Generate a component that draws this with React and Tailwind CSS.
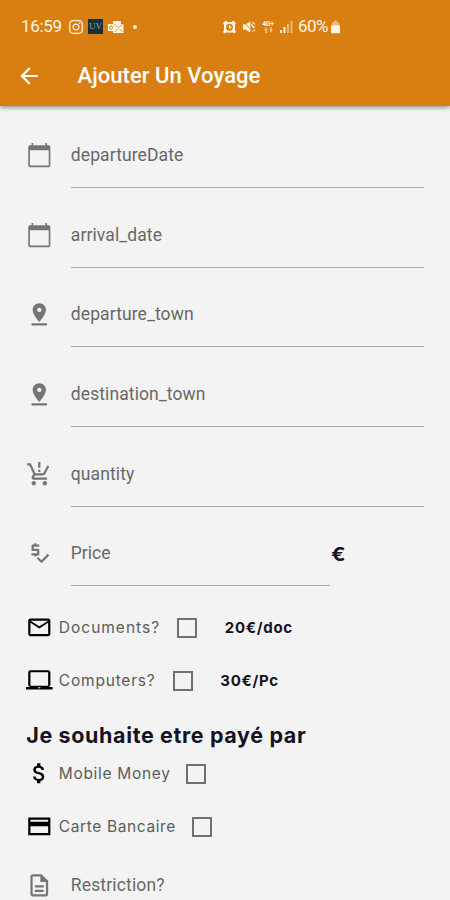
import {
  MdArrowBack, MdPinDrop, MdProductionQuantityLimits, MdPriceCheck,
  MdMailOutline, MdAttachMoney, MdOutlineDescription,
} from "react-icons/md";
import { FaInstagram } from "react-icons/fa";

const ICON = 26.6;

function CardIcon() {
  return (
    <svg width={ICON} height={ICON} viewBox="0 0 24 24" fill="currentColor">
      <path fillRule="evenodd" d="M2 4h20v16H2zM4 6v2h16V6zM4 12v6h16v-6z" />
    </svg>
  );
}

function CalendarIcon({ size }) {
  return (
    <svg width={size} height={size} viewBox="0 0 24 24" fill="currentColor">
      <path fillRule="evenodd" d="M5 1h1.500v2h11V1H19v2h1.200c1 0 1.800.8 1.800 1.800V21c0 1-.8 1.800-1.800 1.800H3.800C2.800 22.800 2 22 2 21V4.800C2 3.800 2.800 3 3.800 3H5zM3.500 7.500v13.800h17V7.500z" />
    </svg>
  );
}

function LaptopIcon() {
  return (
    <svg width={ICON} height={ICON} viewBox="0 0 24 24" fill="currentColor">
      <path fillRule="evenodd" d="M20 18c1.100 0 2-.9 2-2V5c0-1.100-.9-2-2-2H4c-1.100 0-2 .9-2 2v11c0 1.100.9 2 2 2H0v2.300h24V18zM4 4.700h16V17H4zM11 18.200h2v1h-2z" />
    </svg>
  );
}

function StatusBar() {
  return (
    <div className="flex h-[53px] items-center pl-[21px] text-[#fff3e2]">
      <span className="w-[47px] text-[17px] leading-none tracking-[-0.3px]">16:59</span>
      <FaInstagram size={16} />
      <span className="ml-[4px] flex h-[15px] w-[15px] items-center justify-center bg-[#19303c] font-['Liberation_Serif',serif] text-[9px] leading-none text-[#8fa3ab]">UV</span>
      <svg className="ml-[5px]" width="16" height="14" viewBox="0 0 16 14" fill="currentColor">
        <path d="M5 1h8v3h2.500v9H5v-2H0V4h5z" />
        <circle cx="3" cy="7.500" r="1.500" fill="none" stroke="#d97f12" />
        <path d="M6.500 4.500l4 3 4-3M7 12l2.500-3M14.500 12l-3-3" fill="none" stroke="#d97f12" strokeWidth="0.800" />
      </svg>
      <span className="ml-[9px] h-[4px] w-[4px] rounded-full bg-current" />
      <svg className="ml-[86px]" width="13" height="14" viewBox="0 0 13 14" fill="currentColor">
        <path d="M0 3L3 .5 4.500 2h4L10 .5 13 3l-1 2v5l1 2-1.500 1.500L10 12.500H3L1.500 13.500 0 12l1-2V5z" />
        <circle cx="6.500" cy="7.300" r="3.500" fill="#d97f12" />
        <path d="M6.500 5v2.500h2" fill="none" stroke="currentColor" strokeWidth="1.300" />
      </svg>
      <svg className="ml-[6px]" width="14" height="14" viewBox="0 0 15 14" fill="currentColor">
        <path d="M1 4h3l5-3v12l-5-3H1z" />
        <path d="M11 2l3 2M11 7h3M11 12l3-2M10 4l3 4" fill="none" stroke="currentColor" strokeWidth="1.300" />
        <path d="M1 1l12 12" stroke="#d97f12" strokeWidth="1" />
      </svg>
      <span className="ml-[5px] flex w-[14px] flex-col items-center text-[7px] leading-[6px] font-bold">
        <span className="tracking-[-0.300px]">4G+</span>
        <svg width="9" height="6" viewBox="0 0 9 6" fill="currentColor" opacity="0.5">
          <path d="M0 3l2-3 2 3H3v3H1V3zM5 3h1V0h2v3h1L7 6z" />
        </svg>
      </span>
      <svg className="ml-[5px]" width="13" height="13" viewBox="0 0 13 13" fill="currentColor">
        <path d="M0 10h2v3H0zM3.500 7h2v6h-2z" />
        <path d="M7 4h2v9H7zM10.500 1h2v12h-2z" opacity="0.5" />
      </svg>
      <span className="ml-[5px] text-[17px] leading-none tracking-[-0.600px]">60%</span>
      <svg className="ml-[3px]" width="9" height="14" viewBox="0 0 10 14" fill="currentColor">
        <path d="M3 0h4v2h2v4H1V2h2z" opacity="0.5" />
        <rect x="0" y="5" width="10" height="9" rx="1" />
      </svg>
    </div>
  );
}

function Field({ Icon, label, spacing = "", suffix }) {
  return (
    <div className="flex h-[79.700px] items-start">
      <span className="mt-[2px] w-[44.500px] shrink-0 text-[#757575]"><Icon size={ICON} /></span>
      <div className={`h-[48px] border-b border-[#acacac] ${suffix ? "w-[259px]" : "w-[353px]"}`}>
        <span className={`block pt-[2px] text-[17.500px] leading-[26px] text-[#686868] ${spacing}`}>{label}</span>
      </div>
      {suffix && <span className="mt-[4px] ml-[1px] origin-left scale-x-[1.15] font-['Inter',sans-serif] text-[18.500px] leading-[25px] font-bold text-[#16131f]">{suffix}</span>}
    </div>
  );
}

function Option({ icon, label, width, spacing, price }) {
  return (
    <div className="flex h-[53px] items-center font-['Inter',sans-serif]">
      <span className="w-[32.500px] shrink-0 text-black">{icon}</span>
      <span className={`shrink-0 text-[15.500px] leading-none whitespace-nowrap text-[#5c5c5c] ${width} ${spacing}`}>{label}</span>
      <span className="h-[20px] w-[20px] shrink-0 border-2 border-[#707070]" />
      {price && <span className="ml-[27.500px] text-[15px] leading-none font-bold tracking-[0.700px] text-[#16131f]">{price}</span>}
    </div>
  );
}

export default function App() {
  return (
    <div className="h-[900px] w-[450px] overflow-hidden bg-[#f3f3f3] font-['Roboto',sans-serif]">
      <header className="h-[106px] bg-[#d97f12] shadow-[0_1px_5px_rgba(0,0,0,0.5)]">
        <StatusBar />
        <div className="flex h-[46px] items-center pl-[16px] text-white">
          <MdArrowBack size={26} />
          <h1 className="ml-[35.500px] text-[22px] leading-none font-medium tracking-[0.050px]">Ajouter Un Voyage</h1>
        </div>
      </header>
      <main className="pt-[34px] pl-[26.300px]">
        <Field Icon={CalendarIcon} label="departureDate" spacing="tracking-[0.100px]" />
        <Field Icon={CalendarIcon} label="arrival_date" spacing="tracking-[0.100px]" />
        <Field Icon={MdPinDrop} label="departure_town" spacing="tracking-[0.100px]" />
        <Field Icon={MdPinDrop} label="destination_town" spacing="tracking-[0.100px]" />
        <Field Icon={MdProductionQuantityLimits} label="quantity" spacing="tracking-[0.100px]" />
        <Field Icon={MdPriceCheck} label="Price" suffix="€" />
        <div className="-mt-[17px]">
          <Option icon={<MdMailOutline size={ICON} />} label="Documents?" width="w-[118.500px]" spacing="tracking-[1px]" price="20€/doc" />
          <Option icon={<LaptopIcon />} label="Computers?" width="w-[114px]" spacing="tracking-[0.800px]" price="30€/Pc" />
        </div>
        <h2 className="mt-[15px] h-[25px] font-['Inter',sans-serif] text-[21.500px] leading-[27px] font-bold tracking-[0.620px] whitespace-nowrap text-[#16131f]">Je souhaite etre payé par</h2>
        <Option icon={<MdAttachMoney size={ICON} />} label="Mobile Money" width="w-[127.500px]" spacing="tracking-[0.680px]" />
        <Option icon={<CardIcon />} label="Carte Bancaire" width="w-[133px]" spacing="tracking-[0.620px]" />
        <div className="mt-[17px]">
          <Field Icon={MdOutlineDescription} label="Restriction?" spacing="tracking-[0.150px]" />
        </div>
      </main>
    </div>
  );
}
